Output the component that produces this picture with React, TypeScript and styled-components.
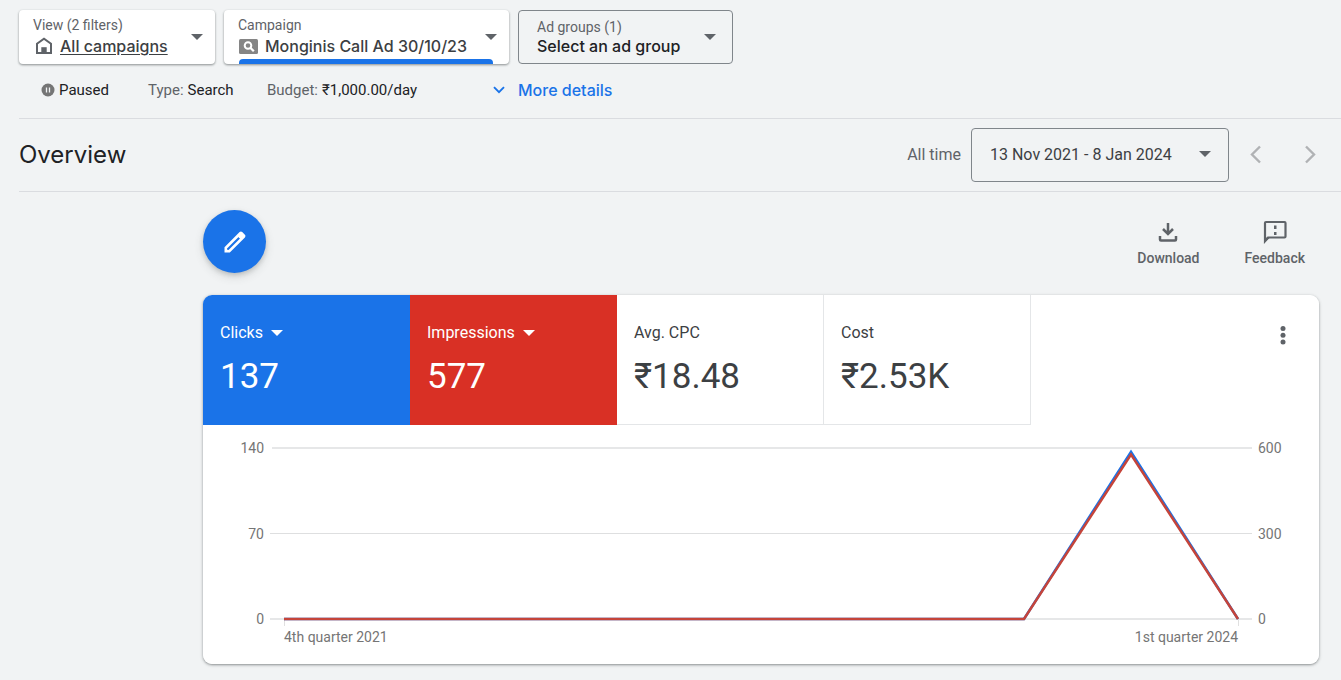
import React from "react";
import styled, { createGlobalStyle } from "styled-components";

const GlobalStyle = createGlobalStyle`
  *, *::before, *::after { box-sizing: border-box; }
  body {
    margin: 0;
    background: #f1f3f4;
    color: #202124;
    font-family: Roboto, "Liberation Sans", sans-serif;
    font-size: 14px;
  }
  button { font: inherit; color: inherit; background: none; border: 0; padding: 0; cursor: pointer; text-align: left; }
  svg { display: block; flex: none; }
`;

const display = `Inter, Roboto, sans-serif`;

const Scope = styled.header`
  padding: 10px 0 0 19px;
`;

const Selectors = styled.nav`
  display: flex;
  gap: 9px;
`;

const Selector = styled.button<{ $width: number; $outlined?: boolean }>`
  position: relative;
  display: flex;
  align-items: center;
  justify-content: space-between;
  width: ${(p) => p.$width}px;
  height: 54px;
  padding: ${(p) => (p.$outlined ? "0 16px 0 18px" : "0 12px 0 14px")};
  border-radius: 4px;
  ${(p) =>
    p.$outlined
      ? "border: 1px solid #80868b;"
      : "background: #fff; box-shadow: 0 1px 2px rgba(60, 64, 67, 0.4), 0 1px 2px 1px rgba(60, 64, 67, 0.12);"}
`;

const SelectorText = styled.span<{ $raised?: boolean }>`
  display: flex;
  flex-direction: column;
  gap: ${(p) => (p.$raised ? 2 : 0)}px;
  padding-bottom: ${(p) => (p.$raised ? 2 : 1)}px;
`;

const SelectorLabel = styled.span`
  color: #5f6368;
  font-size: 14px;
  line-height: 18px;
`;

const SelectorValue = styled.span`
  display: flex;
  align-items: center;
  gap: 6px;
  font: 450 16px/20px ${display};
  color: #3c4043;
  white-space: nowrap;
`;

const StrongValue = styled(SelectorValue)`
  color: #202124;
`;

const Underlined = styled.span`
  text-decoration: underline;
  text-underline-offset: 2px;
`;

const ActiveBar = styled.span`
  position: absolute;
  left: 15px;
  right: 16px;
  bottom: 0;
  height: 5px;
  border-radius: 4px 4px 0 0;
  background: #1a73e8;
`;

const Status = styled.div`
  display: flex;
  align-items: center;
  height: 54px;
  padding: 0 0 2px 22px;
  font-size: 15px;
`;

const StatusItem = styled.span<{ $width: number }>`
  display: flex;
  align-items: center;
  gap: 4px;
  width: ${(p) => p.$width}px;
  white-space: nowrap;
`;

const Muted = styled.span`
  color: #5f6368;
`;

const MoreDetails = styled.button`
  display: flex;
  align-items: center;
  gap: 13px;
  font: 450 16px/20px ${display};
  color: #1a73e8;
`;

const TitleBar = styled.section`
  display: flex;
  align-items: center;
  height: 74px;
  margin-left: 19px;
  padding: 0 20px 0 0;
  border-top: 1px solid #dadce0;
  border-bottom: 1px solid #dadce0;
`;

const Title = styled.h1`
  flex: 1;
  margin: 0;
  font: 400 24px/32px ${display};
  color: #202124;
`;

const RangeName = styled.span`
  margin-right: 10px;
  padding-bottom: 2px;
  color: #5f6368;
  font-size: 16px;
`;

const DateButton = styled.button`
  display: flex;
  align-items: center;
  justify-content: space-between;
  width: 258px;
  height: 54px;
  padding: 0 17px 2px 18px;
  border: 1px solid #80868b;
  border-radius: 4px;
  color: #3c4043;
  font-size: 16px;
`;

const Pager = styled.div`
  display: flex;
  gap: 32px;
  margin-left: 16px;
`;

const Main = styled.main`
  padding: 18px 22px 16px 203px;
`;

const Toolbar = styled.div`
  display: flex;
  align-items: flex-start;
  justify-content: space-between;
  height: 85px;
`;

const Fab = styled.button`
  display: flex;
  align-items: center;
  justify-content: center;
  width: 63px;
  height: 63px;
  border-radius: 50%;
  background: #1a73e8;
  box-shadow: 0 2px 4px rgba(60, 64, 67, 0.2), 0 4px 10px rgba(60, 64, 67, 0.15);
`;

const Actions = styled.div`
  display: flex;
  gap: 45px;
  padding: 9px 14px 0 0;
`;

const Action = styled.button`
  display: flex;
  flex-direction: column;
  align-items: center;
  gap: 1px;
  color: #5f6368;
  font-size: 14px;
  font-weight: 500;
  line-height: 24px;
`;

const Card = styled.section`
  overflow: hidden;
  border-radius: 9px;
  background: #fff;
`;

const CardShadow = styled.div`
  border-radius: 9px;
  box-shadow: 0 1px 2px rgba(60, 64, 67, 0.4), 0 1px 3px 1px rgba(60, 64, 67, 0.15);
`;

const Metrics = styled.div`
  display: flex;
`;

const Metric = styled.button<{ $fill?: string }>`
  display: flex;
  flex-direction: column;
  width: 207px;
  height: 130px;
  padding: 26px 0 0 17px;
  background: ${(p) => p.$fill ?? "#fff"};
  color: ${(p) => (p.$fill ? "#fff" : "#3c4043")};
  ${(p) => (p.$fill ? "" : "border: solid #e4e6e8; border-width: 0 1px 1px 0;")}
`;

const MetricName = styled.span`
  display: flex;
  align-items: center;
  gap: 8px;
  font-size: 16px;
  line-height: 24px;
`;

const MetricValue = styled.span`
  margin-top: 12px;
  font-size: 35px;
  line-height: 40px;
`;

const MenuButton = styled.button`
  display: flex;
  justify-content: center;
  width: 24px;
  height: 24px;
  margin: 29px 24px 0 auto;
`;

const Chart = styled.figure`
  display: grid;
  grid-template-columns: 61px 1fr 61px;
  column-gap: 6px;
  margin: 0;
  padding: 13px 0 18px;
  color: #757575;
  font-size: 14px;
`;

const Axis = styled.div<{ $end?: boolean }>`
  display: flex;
  flex-direction: column;
  justify-content: space-between;
  height: 191px;
  line-height: 20px;
  text-align: ${(p) => (p.$end ? "right" : "left")};
`;

const Plot = styled.svg`
  width: 100%;
  height: 191px;
`;

const Dates = styled.figcaption`
  grid-column: 2;
  display: flex;
  justify-content: space-between;
  padding: 0 14px;
  line-height: 17px;
`;

const Caret = ({ color = "#5f6368" }: { color?: string }) => (
  <svg width="12" height="6" viewBox="0 0 12 6" aria-hidden="true">
    <path d="M0 0h12L6 6z" fill={color} />
  </svg>
);

const Chevron = ({ left }: { left?: boolean }) => (
  <svg width="22" height="22" viewBox="0 0 22 22" aria-hidden="true">
    <path
      d={left ? "M15 2.500L7 10.500l8 8" : "M7 2.500l8 8-8 8"}
      fill="none"
      stroke="#b0b2b4"
      strokeWidth="2.400"
    />
  </svg>
);

const HomeIcon = () => (
  <svg width="21" height="18" viewBox="0 0 21 18" aria-hidden="true">
    <path d="M4 16V6.800L11 1.700l7 5.100V16z" fill="none" stroke="#5f6368" strokeWidth="2" />
    <path d="M8.300 10.200h5.400V16H8.300z" fill="#5f6368" />
  </svg>
);

const SearchBadge = () => (
  <svg width="21" height="16" viewBox="0 0 21 16" aria-hidden="true">
    <rect x="1" y="1" width="19" height="15" rx="1.500" fill="#858585" />
    <circle cx="10" cy="7.500" r="3.300" fill="none" stroke="#fff" strokeWidth="2" />
    <path d="M12.300 9.800l3.500 3.500" stroke="#fff" strokeWidth="2.300" />
  </svg>
);

const PauseIcon = () => (
  <svg width="14" height="14" viewBox="0 0 14 14" aria-hidden="true">
    <circle cx="7" cy="7" r="6.500" fill="#757575" />
    <path d="M5.500 4.500v5M8.500 4.500v5" stroke="#f1f3f4" strokeWidth="1.300" />
  </svg>
);

const ExpandIcon = () => (
  <svg width="12" height="8" viewBox="0 0 12 8" aria-hidden="true">
    <path d="M1 1.200l5 5 5-5" fill="none" stroke="#1a73e8" strokeWidth="1.900" />
  </svg>
);

const PencilIcon = () => (
  <svg width="24" height="24" viewBox="0 0 24 24" aria-hidden="true">
    <path
      fillRule="evenodd"
      fill="#fff"
      d="M1.500 22.500v-5.300L16.600 2.100c.7-.7 1.900-.7 2.600 0l2.700 2.700c.7.7.7 1.900 0 2.600L6.800 22.500zM4.200 19.800l1.300.2L17.300 8.200 15.800 6.700 4 18.500z"
    />
    <path d="M14.300 6l2-2 4 4-2 2z" fill="#fff" />
  </svg>
);

const DownloadIcon = () => (
  <svg width="26" height="26" viewBox="0 0 26 26" aria-hidden="true" fill="none" stroke="#5f6368" strokeWidth="2.500">
    <path d="M13 4v11M8 10l5 5 5-5" />
    <path d="M5 17v3.500q0 1 1 1h14q1 0 1-1V17" />
  </svg>
);

const FeedbackIcon = () => (
  <svg width="26" height="26" viewBox="0 0 26 26" aria-hidden="true">
    <path d="M3 22V4q0-1 1-1h18.500q1 0 1 1v13.500q0 1-1 1H6z" fill="none" stroke="#5f6368" strokeWidth="2.200" />
    <path d="M2 19v5.500l6-6z" fill="#5f6368" />
    <path d="M12 6.500h2.500v3.500H12zM12 13h2.500v3H12z" fill="#5f6368" />
  </svg>
);

const KebabIcon = () => (
  <svg width="6" height="22" viewBox="0 0 6 22" aria-hidden="true" fill="#5f6368">
    <circle cx="3" cy="4.500" r="2.500" />
    <circle cx="3" cy="11.300" r="2.500" />
    <circle cx="3" cy="18" r="2.500" />
  </svg>
);

const metrics = [
  { name: "Clicks", value: "137", fill: "#1a73e8" },
  { name: "Impressions", value: "577", fill: "#d93025" },
  { name: "Avg. CPC", value: "₹18.48" },
  { name: "Cost", value: "₹2.53K" },
];

export default function App() {
  return (
    <>
      <GlobalStyle />
      <Scope>
        <Selectors aria-label="Scope">
          <Selector $width={196} aria-haspopup="listbox">
            <SelectorText $raised>
              <SelectorLabel>View (2 filters)</SelectorLabel>
              <SelectorValue>
                <HomeIcon />
                <Underlined>All campaigns</Underlined>
              </SelectorValue>
            </SelectorText>
            <Caret />
          </Selector>
          <Selector $width={285} aria-haspopup="listbox">
            <SelectorText $raised>
              <SelectorLabel>Campaign</SelectorLabel>
              <SelectorValue>
                <SearchBadge />
                Monginis Call Ad 30/10/23
              </SelectorValue>
            </SelectorText>
            <Caret />
            <ActiveBar />
          </Selector>
          <Selector $width={215} $outlined aria-haspopup="listbox">
            <SelectorText>
              <SelectorLabel>Ad groups (1)</SelectorLabel>
              <StrongValue>Select an ad group</StrongValue>
            </SelectorText>
            <Caret />
          </Selector>
        </Selectors>
        <Status>
          <StatusItem $width={107}>
            <PauseIcon />
            Paused
          </StatusItem>
          <StatusItem $width={119}>
            <Muted>Type:</Muted>
            Search
          </StatusItem>
          <StatusItem $width={226}>
            <Muted>Budget:</Muted>
            ₹1,000.00/day
          </StatusItem>
          <MoreDetails>
            <ExpandIcon />
            More details
          </MoreDetails>
        </Status>
      </Scope>

      <TitleBar>
        <Title>Overview</Title>
        <RangeName>All time</RangeName>
        <DateButton aria-haspopup="dialog">
          13 Nov 2021 - 8 Jan 2024
          <Caret />
        </DateButton>
        <Pager>
          <button aria-label="Previous period">
            <Chevron left />
          </button>
          <button aria-label="Next period">
            <Chevron />
          </button>
        </Pager>
      </TitleBar>

      <Main>
        <Toolbar>
          <Fab aria-label="Edit">
            <PencilIcon />
          </Fab>
          <Actions>
            <Action>
              <DownloadIcon />
              Download
            </Action>
            <Action>
              <FeedbackIcon />
              Feedback
            </Action>
          </Actions>
        </Toolbar>

        <CardShadow>
          <Card>
            <Metrics>
              {metrics.map((m) => (
                <Metric key={m.name} $fill={m.fill}>
                  <MetricName>
                    {m.name}
                    {m.fill && <Caret color="#fff" />}
                  </MetricName>
                  <MetricValue>{m.value}</MetricValue>
                </Metric>
              ))}
              <MenuButton aria-label="More options">
                <KebabIcon />
              </MenuButton>
            </Metrics>
            <Chart>
              <Axis $end>
                <span>140</span>
                <span>70</span>
                <span>0</span>
              </Axis>
              <Plot viewBox="0 0 982 191" preserveAspectRatio="none" role="img" aria-label="Clicks and impressions by quarter">
                <path d="M2 10h980" stroke="#e6e7e8" strokeWidth="2" />
                <path d="M0 95.500h982" stroke="#dedfe0" strokeWidth="1" />
                <path d="M0 181h982" stroke="#e6e7e8" strokeWidth="2" />
                <path d="M14.500 181v7M968.500 181v7" stroke="#e0e0e0" strokeWidth="1" />
                <g fill="none" strokeWidth="2.500" strokeLinejoin="miter">
                  <path d="M14 181H754L861 13.700 968 181" stroke="#1a73e8" />
                  <path d="M14 181H754L861 16.600 968 181" stroke="#c5443a" />
                </g>
              </Plot>
              <Axis>
                <span>600</span>
                <span>300</span>
                <span>0</span>
              </Axis>
              <Dates>
                <span>4th quarter 2021</span>
                <span>1st quarter 2024</span>
              </Dates>
            </Chart>
          </Card>
        </CardShadow>
      </Main>
    </>
  );
}
